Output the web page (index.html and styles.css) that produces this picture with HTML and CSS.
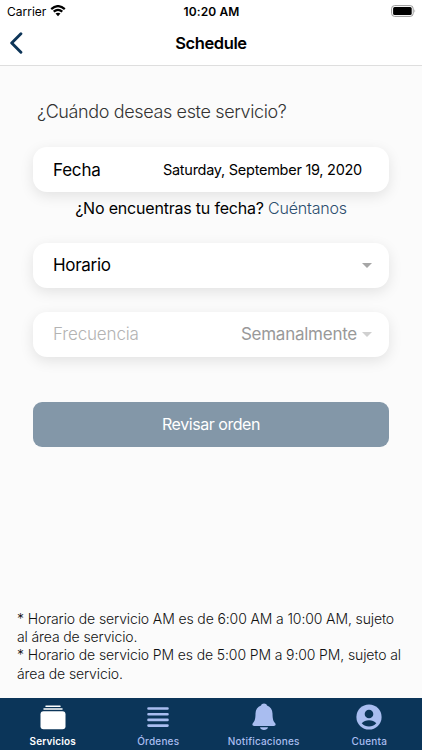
FILE: index.html
```html
<!DOCTYPE html>
<html lang="es">
<head>
<meta charset="utf-8">
<title>Schedule</title>
<link rel="stylesheet" href="styles.css">
</head>
<body>
<div class="app">
  <header class="header">
    <div class="status">
      <div class="status-left">
        <span class="carrier">Carrier</span>
        <svg class="wifi" width="16" height="12" viewBox="0 0 16 12"><path d="M1.2 4.1Q8-1.9 14.8 4.1M3.7 6.7Q8 3 12.3 6.7" fill="none" stroke="#000" stroke-width="2.2"/><path d="M5.5 8.6Q8 6.7 10.5 8.6L8 11.2Z"/></svg>
      </div>
      <span class="time">10:20 AM</span>
      <svg class="battery" width="26" height="12" viewBox="0 0 26 12"><rect x=".6" y=".6" width="21.6" height="10.8" rx="3" fill="#fff" stroke="#999"/><rect x="2.1" y="2.1" width="18.6" height="7.8" rx="1.5"/><path d="M23.5 4.2Q25 6 23.5 7.8Z" fill="#999"/></svg>
    </div>
    <div class="nav">
      <svg class="back" width="14" height="22" viewBox="0 0 14 22"><path d="M11.9 1.8L2.7 11L11.9 20.2" fill="none" stroke="#0d3558" stroke-width="2.9" stroke-linecap="round" stroke-linejoin="round"/></svg>
      <h1 class="title">Schedule</h1>
    </div>
  </header>
  <main class="content">
    <p class="question"><span>¿Cuándo deseas este servicio?</span></p>
    <div class="card card-date"><span class="label fecha">Fecha</span><span class="date">Saturday, September 19, 2020</span></div>
    <p class="hint"><span class="hint-text">¿No encuentras tu fecha?</span> <a class="link">Cuéntanos</a></p>
    <div class="card card-time"><span class="label horario">Horario</span><i class="caret"></i></div>
    <div class="card card-freq"><span class="label frecuencia">Frecuencia</span><span class="value">Semanalmente</span><i class="caret light"></i></div>
    <div class="button"><span>Revisar orden</span></div>
    <div class="notes">
      <p class="n1">* Horario de servicio AM es de 6:00 AM a 10:00 AM, sujeto<br>al área de servicio.</p>
      <p class="n2">* Horario de servicio PM es de 5:00 PM a 9:00 PM, sujeto al<br>área de servicio.</p>
    </div>
  </main>
  <nav class="tabs">
    <div class="tab active">
      <svg width="28" height="28" viewBox="0 0 28 28"><rect x="1.5" y="8.3" width="25" height="18" rx="3"/><path d="M7 3.2H21M5 6.1H23" stroke="currentColor" stroke-width="1.5" stroke-linecap="round"/></svg>
      <span class="t1">Servicios</span>
    </div>
    <div class="tab">
      <svg width="28" height="28" viewBox="0 0 28 28"><path d="M4.5 5.5H23.5M4.5 11.2H23.5M4.5 16.9H23.5M4.5 22.6H23.5" stroke="currentColor" stroke-width="2.6" stroke-linecap="round"/></svg>
      <span class="t2">Órdenes</span>
    </div>
    <div class="tab">
      <svg width="28" height="28" viewBox="0 0 28 28"><path d="M14 .6C12.5.6 11.5 1.3 11 2.5C7.500 3.600 5.600 6.500 5.500 10.400C5.400 16.500 4.700 17.700 3 20C1.800 21.500 2.400 22.900 4.200 22.900H23.800C25.600 22.900 26.200 21.500 25 20C23.300 17.700 22.600 16.500 22.500 10.400C22.400 6.500 20.500 3.600 17 2.500C16.500 1.300 15.500.6 14 .6ZM10 24.300H18C17.500 28 10.500 28 10 24.300Z"/></svg>
      <span class="t3">Notificaciones</span>
    </div>
    <div class="tab">
      <svg width="28" height="28" viewBox="0 0 28 28"><circle cx="14" cy="14" r="12.6"/><circle cx="14" cy="11" r="4.3" fill="#0b3559"/><path d="M6.7 20.3C10 16.3 18 16.3 21.3 20.3C17.3 24.7 10.7 24.7 6.7 20.3Z" fill="#0b3559"/></svg>
      <span class="t4">Cuenta</span>
    </div>
  </nav>
</div>
</body>
</html>
```
FILE: styles.css
```css
* { box-sizing: border-box; }
body { margin: 0; background: #fbfbfb; font-family: Inter, "Liberation Sans", sans-serif; color: #000; }
p, h1 { margin: 0; }
svg { display: block; flex: none; fill: currentColor; }
span, a { white-space: nowrap; }
.app { width: 422px; height: 750px; display: flex; flex-direction: column; overflow: hidden; }
.header { height: 66px; background: #fff; border-bottom: 1px solid #dedede; }
.status { height: 22px; display: grid; grid-template-columns: 1fr auto 1fr; align-items: center; padding: 0 5px 0 7px; }
.status-left { display: flex; align-items: center; gap: 4px; }
.carrier { font-size: 12px; letter-spacing: 0; }
.wifi { margin-top: -1px; }
.time { font-size: 12px; font-weight: 600; letter-spacing: .1px; margin-right: 1px; }
.battery { justify-self: end; margin-top: -1px; }
.nav { height: 43px; display: grid; grid-template-columns: 28px 1fr 28px; align-items: center; }
.back { margin: -2px 0 0 9px; }
.title { font-size: 16.5px; line-height: 22px; font-weight: 600; text-align: center; letter-spacing: -.4px; margin-top: -1px; }
.content { flex: 1; display: flex; flex-direction: column; padding: 34px 33px 0; }
.question { font-size: 18px; line-height: 24px; font-weight: 300; color: #333; padding-left: 4px; letter-spacing: -.37px; }
.card { height: 45px; border-radius: 14px; background: #fff; box-shadow: 0 4px 14px rgba(0,0,0,.1); display: flex; align-items: center; padding: 0 17px 1px 20px; flex: none; }
.card-date { margin-top: 23px; padding-right: 27px; padding-bottom: 0; }
.label { margin-right: auto; font-size: 17px; letter-spacing: -.3px; }
.fecha { letter-spacing: -.2px; }
.date { font-size: 14.5px; letter-spacing: -.27px; }
.hint { font-size: 16px; line-height: 20px; margin-top: 6px; text-align: center; letter-spacing: -.2px; }
.link { color: #2c4e6e; font-weight: 300; }
.card-time { margin-top: 25px; }
.card-freq { margin-top: 24px; }
.frecuencia { color: #b3b3b3; font-weight: 300; letter-spacing: -.15px; }
.value { color: #999; font-size: 17px; margin-right: 5px; letter-spacing: -.25px; }
.caret { width: 0; height: 0; border: 5px solid transparent; border-top-color: #a6a6a6; border-bottom: 0; }
.light { border-top-color: #d0d0d0; }
.button { flex: none; height: 45px; margin-top: 45px; padding-bottom: 1px; border-radius: 9px; background: #8397a8; color: #fff; display: flex; align-items: center; justify-content: center; font-size: 16px; letter-spacing: -.45px; }
.notes { margin: auto -20px 15px -16px; font-size: 14px; line-height: 18.3px; font-weight: 300; color: #111; white-space: nowrap; letter-spacing: -.12px; }
.tabs { height: 52px; flex: none; display: grid; grid-template-columns: repeat(4, 1fr); background: #0b3559; color: #a9bdf0; }
.tab { display: flex; flex-direction: column; align-items: center; padding-top: 5px; }
.tab span { font-size: 10px; line-height: 14px; margin-top: 3px; font-weight: 500; letter-spacing: .2px; }
.tab.active { color: #fff; }
.tab.active span { font-weight: 600; letter-spacing: .15px; }
```
